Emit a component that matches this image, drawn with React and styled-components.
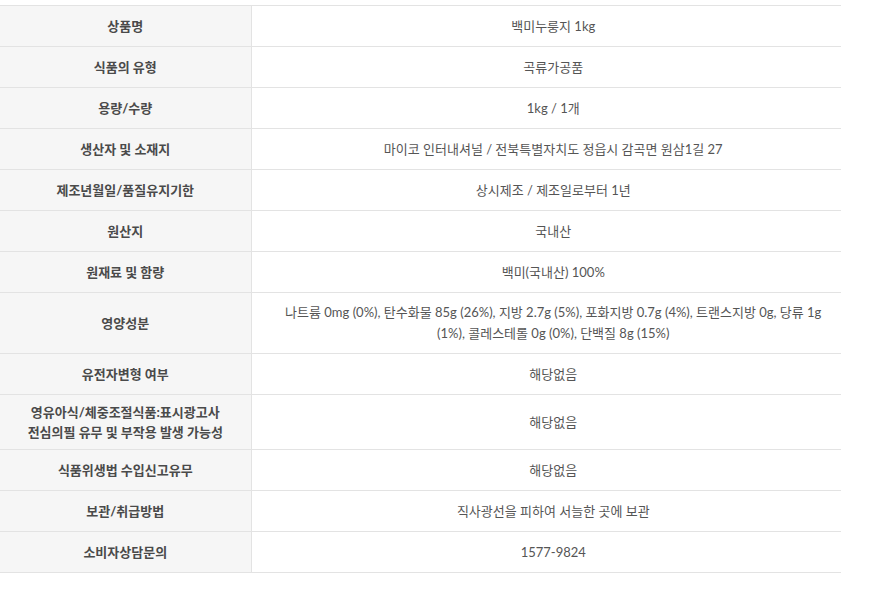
import React from "react";
import styled, { createGlobalStyle } from "styled-components";

const Global = createGlobalStyle`
  html, body { margin: 0; padding: 0; background: #fff; }
  body { font-family: Lato, "Noto Sans CJK KR", sans-serif; }
`;

const Wrap = styled.div`
  padding: 5px 30px 0 0;
  width: 841px;
`;

const Table = styled.table`
  width: 841px;
  border-collapse: collapse;
  table-layout: fixed;
  border-top: 1px solid #e3e3e3;
  border-bottom: 1px solid #e3e3e3;
  font-size: 13px;
`;

const Row = styled.tr`
  border-bottom: 1px solid #e3e3e3;
  &:last-child { border-bottom: none; }
`;

const Label = styled.th`
  width: 251px;
  box-sizing: border-box;
  background: #f6f6f6;
  border-right: 1px solid #e3e3e3;
  color: #4a4a4a;
  font-weight: 700;
  text-align: center;
  vertical-align: middle;
  padding: ${(p) => (p.$tight ? "7px 10px 7px" : "10px 10px")};
  line-height: 20px;
`;

const Value = styled.td`
  color: #555;
  font-weight: 400;
  text-align: center;
  vertical-align: middle;
  padding: ${(p) => (p.$multi ? "9px 8px 9px 22px" : "10px 8px 10px 22px")};
  line-height: ${(p) => (p.$multi ? "21px" : "20px")};
`;

const rows = [
  ["상품명", "백미누룽지 1kg"],
  ["식품의 유형", "곡류가공품"],
  ["용량/수량", "1kg / 1개"],
  ["생산자 및 소재지", "마이코 인터내셔널 / 전북특별자치도 정읍시 감곡면 원삼1길 27"],
  ["제조년월일/품질유지기한", "상시제조 / 제조일로부터 1년"],
  ["원산지", "국내산"],
  ["원재료 및 함량", "백미(국내산) 100%"],
  [
    "영양성분",
    "나트륨 0mg (0%), 탄수화물 85g (26%), 지방 2.7g (5%), 포화지방 0.7g (4%), 트랜스지방 0g, 당류 1g (1%), 콜레스테롤 0g (0%), 단백질 8g (15%)",
    "multi",
  ],
  ["유전자변형 여부", "해당없음"],
  [
    ["영유아식/체중조절식품:표시광고사", "전심의필 유무 및 부작용 발생 가능성"],
    "해당없음",
    "tight",
  ],
  ["식품위생법 수입신고유무", "해당없음"],
  ["보관/취급방법", "직사광선을 피하여 서늘한 곳에 보관"],
  ["소비자상담문의", "1577-9824"],
];

export default function App() {
  return (
    <Wrap>
      <Global />
      <Table>
        <tbody>
          {rows.map(([label, value, kind], i) => (
            <Row key={i}>
              <Label $tight={kind === "tight"}>
                {Array.isArray(label)
                  ? label.map((l, j) => (
                      <React.Fragment key={j}>
                        {j > 0 && <br />}
                        {l}
                      </React.Fragment>
                    ))
                  : label}
              </Label>
              <Value $multi={kind === "multi"}>{value}</Value>
            </Row>
          ))}
        </tbody>
      </Table>
    </Wrap>
  );
}
